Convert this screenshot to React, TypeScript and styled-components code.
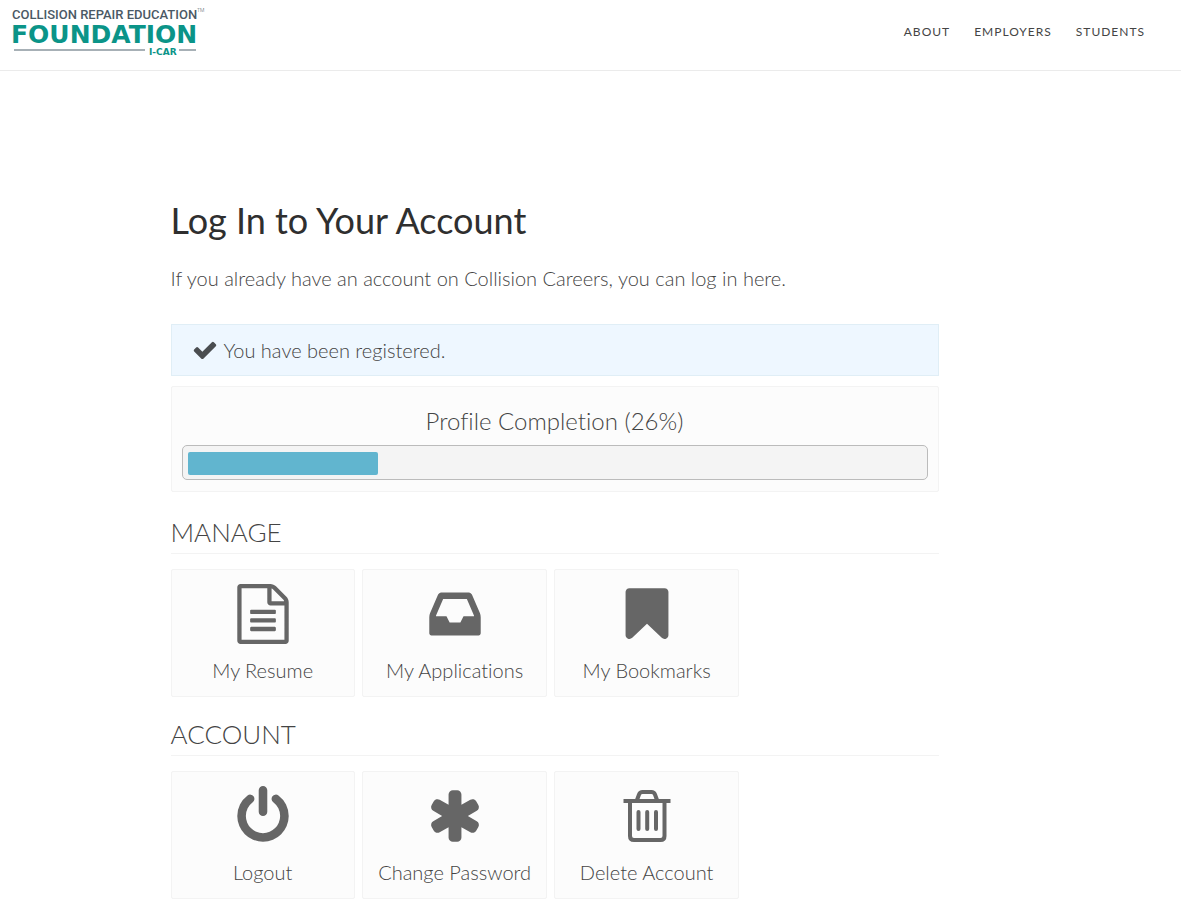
import React from "react";
import styled, { createGlobalStyle } from "styled-components";

const GlobalStyle = createGlobalStyle`
  *, *::before, *::after { box-sizing: border-box; }
  body {
    margin: 0;
    background: #fff;
    color: #444;
    font-family: Lato, "Open Sans", sans-serif;
    font-size: 20px;
    font-weight: 300;
    line-height: 32px;
  }
`;

const Header = styled.header`
  display: flex;
  justify-content: space-between;
  align-items: flex-start;
  height: 71px;
  padding: 0 36px 0 8px;
  border-bottom: 1px solid #ebebeb;
`;

const LogoLink = styled.a`
  display: block;
  padding-top: 4px;
  svg { display: block; }
`;

const Nav = styled.nav`
  display: flex;
  gap: 24px;
  padding-top: 22px;
`;

const NavLink = styled.a`
  color: #444;
  font-size: 12px;
  font-weight: 400;
  line-height: 20px;
  letter-spacing: 1px;
  text-transform: uppercase;
  text-decoration: none;
`;

const Main = styled.main`
  max-width: 840px;
  margin: 0 auto;
  padding: 125px 72px 5px 0;
`;

const Title = styled.h1`
  margin: 0;
  color: #2f2f2f;
  font-size: 36px;
  font-weight: 400;
  line-height: 48px;
`;

const Intro = styled.p`
  margin: 18px 0 30px;
`;

const Notice = styled.div`
  display: flex;
  align-items: center;
  gap: 6px;
  height: 52px;
  padding: 0 20px;
  border: 1px solid #e0eef6;
  background: #eef7ff;
`;

const Panel = styled.section`
  margin: 10px 0 22px;
  padding: 18px 10px 11px;
  border: 1px solid #f3f3f3;
  border-radius: 2px;
  background: #fcfcfc;
  text-align: center;
`;

const PanelTitle = styled.h2`
  margin: 0 0 8px;
  font-size: 24px;
  font-weight: 300;
  line-height: 32px;
  font-variant-ligatures: none;
`;

const Track = styled.div`
  height: 35px;
  padding: 6px 5px 4px;
  border: 1px solid #bbb;
  border-radius: 5px;
  background: #f4f4f4;
`;

const Bar = styled.div`
  height: 23px;
  border-radius: 2px;
  background: #61b5cf;
`;

const Group = styled.section`
  margin-bottom: 19px;
`;

const SectionTitle = styled.h3`
  margin: 0 0 15px;
  padding-bottom: 3px;
  border-bottom: 1px solid #f3f3f3;
  font-size: 26px;
  font-weight: 300;
  line-height: 36px;
  text-transform: uppercase;
`;

const Cards = styled.div`
  display: flex;
  gap: 1%;
`;

const Card = styled.a`
  display: flex;
  flex-direction: column;
  align-items: center;
  gap: 10px;
  width: 24%;
  height: 128px;
  padding-top: 14px;
  border: 1px solid #f3f3f3;
  border-radius: 2px;
  background: #fcfcfc;
  color: inherit;
  font-variant-ligatures: none;
  text-decoration: none;
  white-space: nowrap;
`;

const Glyph = styled.svg<{ $size: number }>`
  display: block;
  flex: none;
  width: ${(p) => p.$size}px;
  height: ${(p) => p.$size}px;
  fill: #666;
`;

const CheckGlyph = styled(Glyph)`
  fill: #4a4d50;
`;

const icons = {
  file: "M1596 380q28 28 48 76t20 88v1152q0 40-28 68t-68 28h-1344q-40 0-68-28t-28-68v-1600q0-40 28-68t68-28h896q40 0 88 20t76 48zm-444-244v376h376q-10-29-22-41l-313-313q-12-12-41-22zm384 1528v-1024h-416q-40 0-68-28t-28-68v-416h-768v1536h1280zm-1024-864q0-14 9-23t23-9h704q14 0 23 9t9 23v64q0 14-9 23t-23 9h-704q-14 0-23-9t-9-23v-64zm736 224q14 0 23 9t9 23v64q0 14-9 23t-23 9h-704q-14 0-23-9t-9-23v-64q0-14 9-23t23-9h704zm0 256q14 0 23 9t9 23v64q0 14-9 23t-23 9h-704q-14 0-23-9t-9-23v-64q0-14 9-23t23-9h704z",
  inbox: "M1151 960h316q-1-3-2.5-8t-2.5-8l-212-496h-708l-212 496q-1 2-2.5 8t-2.5 8h316l95 192h320zm513 30v482q0 26-19 45t-45 19h-1408q-26 0-45-19t-19-45v-482q0-62 25-123l238-552q10-25 36.5-42t52.5-17h832q26 0 52.5 17t36.5 42l238 552q25 61 25 123z",
  bookmark: "M1420 128q23 0 44 9 33 13 52.5 41t19.5 62v1289q0 34-19.5 62t-52.5 41q-19 8-44 8-48 0-83-32l-441-424-441 424q-36 33-83 33-23 0-44-9-33-13-52.5-41t-19.5-62v-1289q0-34 19.5-62t52.5-41q21-9 44-9h1048z",
  power: "M1664 896q0 156-61 298t-164 245-245 164-298 61-298-61-245-164-164-245-61-298q0-182 80.5-343t226.5-270q43-32 95.5-25t83.5 50q32 42 24.5 94.5t-49.5 84.5q-98 74-151.5 181t-53.5 228q0 104 40.5 198.5t109.5 163.5 163.5 109.5 198.5 40.5 198.5-40.5 163.5-109.5 109.5-163.5 40.5-198.5q0-121-53.5-228t-151.5-181q-42-32-49.5-84.5t24.5-94.5q31-43 84-50t95 25q146 109 226.5 270t80.5 343zm-640-768v640q0 52-38 90t-90 38-90-38-38-90v-640q0-52 38-90t90-38 90 38 38 90z",
  asterisk: "M1546 1050q46 26 59.5 77.5t-12.5 97.5l-64 110q-26 46-77.5 59.5t-97.5-12.5l-266-153v307q0 52-38 90t-90 38h-128q-52 0-90-38t-38-90v-307l-266 153q-46 26-97.5 12.5t-77.5-59.5l-64-110q-26-46-12.5-97.5t59.5-77.5l266-154-266-154q-46-26-59.5-77.5t12.5-97.5l64-110q26-46 77.5-59.5t97.5 12.5l266 153v-307q0-52 38-90t90-38h128q52 0 90 38t38 90v307l266-153q46-26 97.5-12.5t77.5 59.5l64 110q26 46 12.5 97.5t-59.5 77.5l-266 154z",
  check: "M1671 566q0 40-28 68l-724 724-136 136q-28 28-68 28t-68-28l-136-136-362-362q-28-28-28-68t28-68l136-136q28-28 68-28t68 28l294 295 656-657q28-28 68-28t68 28l136 136q28 28 28 68z",
};

function TrashGlyph() {
  return (
    <Glyph $size={60} viewBox="0 0 60 60" aria-hidden="true">
      <g fill="none" stroke="#666" strokeWidth="4">
        <path d="M6.500 15H53.500" />
        <path d="M20 14L22 8.500Q23 6 25.500 6H34.500Q37 6 38 8.500L40 14" />
        <path d="M13 15V50Q13 54 17 54H43.500Q47.500 54 47.500 50V15" />
        <path d="M21.500 26V43M30.200 26V43M39 26V43" strokeLinecap="round" />
      </g>
    </Glyph>
  );
}

type IconName = "file" | "inbox" | "bookmark" | "power" | "asterisk" | "trash";
type Item = { label: string; icon: IconName };

const sections: { title: string; items: Item[] }[] = [
  {
    title: "Manage",
    items: [
      { label: "My Resume", icon: "file" },
      { label: "My Applications", icon: "inbox" },
      { label: "My Bookmarks", icon: "bookmark" },
    ],
  },
  {
    title: "Account",
    items: [
      { label: "Logout", icon: "power" },
      { label: "Change Password", icon: "asterisk" },
      { label: "Delete Account", icon: "trash" },
    ],
  },
];

function CardIcon({ name }: { name: IconName }) {
  if (name === "trash") return <TrashGlyph />;
  return (
    <Glyph $size={60} viewBox="0 0 1792 1792" aria-hidden="true">
      <path d={icons[name]} />
    </Glyph>
  );
}

function Logo() {
  return (
    <svg width="200" height="56" viewBox="0 0 200 56" role="img" aria-label="Collision Repair Education Foundation, I-CAR">
      <text x="4" y="15" fontFamily="Roboto, sans-serif" fontSize="13" fontWeight="500" fill="#4b5965">
        COLLISION REPAIR EDUCATION
      </text>
      <text x="189" y="8" fontFamily="Roboto, sans-serif" fontSize="5" fill="#4b5965">TM</text>
      <text x="3" y="39" fontFamily="DejaVu Sans, sans-serif" fontSize="25" fontWeight="700" fill="#0b9488">
        FOUNDATION
      </text>
      <path d="M6 46H137M171 46H188" stroke="#8a979e" strokeWidth="1.500" />
      <text x="141" y="51" fontFamily="DejaVu Sans, sans-serif" fontSize="9" fontWeight="700" fill="#0b9488">
        I-CAR
      </text>
    </svg>
  );
}

export default function App() {
  const completion = 26;
  return (
    <>
      <GlobalStyle />
      <Header>
        <LogoLink href="#">
          <Logo />
        </LogoLink>
        <Nav aria-label="Main">
          <NavLink href="#about">About</NavLink>
          <NavLink href="#employers">Employers</NavLink>
          <NavLink href="#students">Students</NavLink>
        </Nav>
      </Header>
      <Main>
        <Title>Log In to Your Account</Title>
        <Intro>If you already have an account on Collision Careers, you can log in here.</Intro>
        <Notice role="status">
          <CheckGlyph $size={26} viewBox="0 0 1792 1792" aria-hidden="true">
            <path d={icons.check} />
          </CheckGlyph>
          <span>You have been registered.</span>
        </Notice>
        <Panel>
          <PanelTitle>Profile Completion ({completion}%)</PanelTitle>
          <Track role="progressbar" aria-label="Profile completion" aria-valuenow={completion} aria-valuemin={0} aria-valuemax={100}>
            <Bar style={{ width: `${completion}%` }} />
          </Track>
        </Panel>
        {sections.map((section) => (
          <Group key={section.title}>
            <SectionTitle>{section.title}</SectionTitle>
            <Cards>
              {section.items.map((item) => (
                <Card key={item.label} href="#">
                  <CardIcon name={item.icon} />
                  <span>{item.label}</span>
                </Card>
              ))}
            </Cards>
          </Group>
        ))}
      </Main>
    </>
  );
}
